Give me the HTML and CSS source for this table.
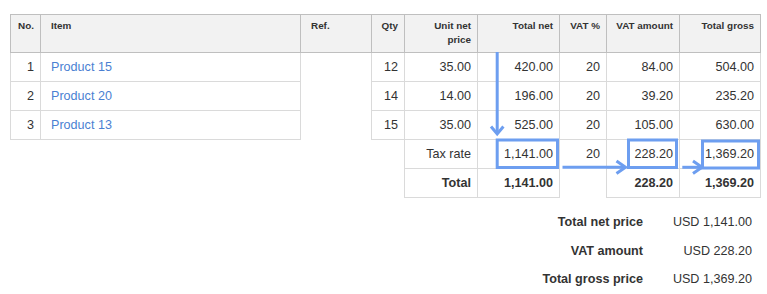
FILE: index.html
```html
<!DOCTYPE html>
<html lang="en">
<head>
    <meta charset="UTF-8">
    <title>Invoice items</title>
    <link rel="stylesheet" href="styles.css">
</head>
<body>
    <div class="sheet">
        <table class="items">
            <colgroup>
                <col class="c-no">
                <col class="c-item">
                <col class="c-ref">
                <col class="c-qty">
                <col class="c-unit">
                <col class="c-net">
                <col class="c-vat">
                <col class="c-vatamt">
                <col class="c-gross">
            </colgroup>
            <thead>
                <tr>
                    <th class="num">No.</th>
                    <th>Item</th>
                    <th>Ref.</th>
                    <th class="num">Qty</th>
                    <th class="num">Unit net price</th>
                    <th class="num">Total net</th>
                    <th class="num">VAT %</th>
                    <th class="num">VAT amount</th>
                    <th class="num">Total gross</th>
                </tr>
            </thead>
            <tbody>
                <tr>
                    <td class="num">1</td>
                    <td><a href="#">Product 15</a></td>
                    <td class="ref" rowspan="3"></td>
                    <td class="num">12</td>
                    <td class="num">35.00</td>
                    <td class="num">420.00</td>
                    <td class="num">20</td>
                    <td class="num">84.00</td>
                    <td class="num">504.00</td>
                </tr>
                <tr>
                    <td class="num">2</td>
                    <td><a href="#">Product 20</a></td>
                    <td class="num">14</td>
                    <td class="num">14.00</td>
                    <td class="num">196.00</td>
                    <td class="num">20</td>
                    <td class="num">39.20</td>
                    <td class="num">235.20</td>
                </tr>
                <tr>
                    <td class="num">3</td>
                    <td><a href="#">Product 13</a></td>
                    <td class="num">15</td>
                    <td class="num">35.00</td>
                    <td class="num">525.00</td>
                    <td class="num">20</td>
                    <td class="num">105.00</td>
                    <td class="num">630.00</td>
                </tr>
                <tr>
                    <td class="blank" colspan="4"></td>
                    <td class="num">Tax rate</td>
                    <td class="num">1,141.00</td>
                    <td class="num open-bottom">20</td>
                    <td class="num">228.20</td>
                    <td class="num">1,369.20</td>
                </tr>
                <tr class="total">
                    <td class="blank" colspan="4"></td>
                    <td class="num">Total</td>
                    <td class="num">1,141.00</td>
                    <td class="num open"></td>
                    <td class="num">228.20</td>
                    <td class="num">1,369.20</td>
                </tr>
            </tbody>
        </table>

        <div class="summary">
            <div class="label">Total net price</div>
            <div class="value">USD 1,141.00</div>
            <div class="label">VAT amount</div>
            <div class="value">USD 228.20</div>
            <div class="label">Total gross price</div>
            <div class="value">USD 1,369.20</div>
        </div>

        <!-- annotation arrows and boxes drawn over the table -->
        <svg class="marks" width="767" height="200" viewBox="0 0 767 200">
            <g fill="none" stroke="#6d9ef0" stroke-width="3">
                <line x1="497.2" y1="52" x2="497.2" y2="133"/>
                <polyline points="491,126.5 497.2,134 503.4,126.5"/>
                <rect x="497.2" y="140" width="60.3" height="27.5"/>

                <line x1="562.5" y1="167.3" x2="625" y2="167.3"/>
                <polyline points="616.5,161 625.5,167.3 616.5,173.6"/>
                <rect x="628.5" y="140" width="48" height="27.5"/>

                <line x1="682.3" y1="167.3" x2="701" y2="167.3"/>
                <polyline points="693,161 702,167.3 693,173.6"/>
                <rect x="702.5" y="141" width="56" height="27"/>
            </g>
        </svg>
    </div>
</body>
</html>
```

FILE: styles.css
```css
body {
    margin: 0;
    font-family: "Liberation Sans", Arial, sans-serif;
    color: #333;
    background: #fff;
}
.sheet {
    position: relative;
    padding: 14px 7px 0 10px;
}
.items {
    width: 750px;
    table-layout: fixed;
    border-collapse: collapse;
    font-size: 12.6px;
}
.c-no { width: 30px; }
.c-item { width: 260px; }
.c-ref { width: 71px; }
.c-qty { width: 33px; }
.c-unit { width: 73px; }
.c-net { width: 82px; }
.c-vat { width: 47px; }
.c-vatamt { width: 73px; }
.c-gross { width: 81px; }
.items th {
    background-color: #f2f2f2;
    border: 1px solid #bfbfbf;
    font-size: 9.9px;
    font-weight: bold;
    line-height: 14px;
    text-align: left;
    vertical-align: top;
    padding: 4px 6px 5px 10px;
}
.items td {
    border: 1px solid #dadada;
    line-height: 18px;
    padding: 5px 6px 5px 10px;
    vertical-align: middle;
}
.items .num {
    text-align: right;
    padding-left: 4px;
}
.items td.ref {
    border-bottom: none;
}
.items td.blank {
    border: none;
}
.items td.open-bottom {
    border-bottom: none;
}
.items td.open {
    border-top: none;
    border-bottom: none;
}
.items a {
    color: #4a7fd2;
    text-decoration: none;
}
.total td {
    font-weight: bold;
}
.summary {
    display: grid;
    grid-template-columns: auto 101px;
    justify-content: end;
    column-gap: 8px;
    margin-top: 10px;
    margin-right: 8px;
    font-size: 12.6px;
    line-height: 28.5px;
}
.summary .label {
    font-weight: bold;
    text-align: right;
}
.summary .value {
    text-align: right;
}
.marks {
    position: absolute;
    top: 0;
    left: 0;
    pointer-events: none;
}
```
